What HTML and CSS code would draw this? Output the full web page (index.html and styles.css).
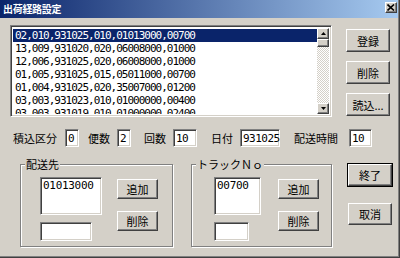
FILE: index.html
```html
<!DOCTYPE html>
<html>
  <head>
    <title>出荷経路設定</title>
    <link rel="stylesheet" href="styles.css">
  </head>
  <body>
    <div class="window">
      <div class="titlebar">
        <span class="title">出荷経路設定</span>
        <button class="close">
          <svg width="8" height="7" viewBox="0 0 8 7"><path d="M0.5 0.5 L7 6.5 M7 0.5 L0.5 6.5" stroke="#000" stroke-width="1.6"/></svg>
        </button>
      </div>

      <div class="content">
        <div class="top-row">
          <div class="listbox main-list">
            <ul class="rows">
              <li class="selected">02,010,931025,010,01013000,00700</li>
              <li>13,009,931020,020,06008000,01000</li>
              <li>12,006,931025,020,06008000,01000</li>
              <li>01,005,931025,015,05011000,00700</li>
              <li>01,004,931025,020,35007000,01200</li>
              <li>03,003,931023,010,01000000,00400</li>
              <li>03,003,931019,010,01000000,02400</li>
            </ul>
            <div class="scrollbar">
              <div class="scroll-btn">
                <svg width="5" height="3" viewBox="0 0 5 3"><path d="M2.5 0 L5 3 L0 3 Z" fill="#000"/></svg>
              </div>
              <div class="thumb"></div>
              <div class="track"></div>
              <div class="scroll-btn">
                <svg width="5" height="3" viewBox="0 0 5 3"><path d="M0 0 L5 0 L2.5 3 Z" fill="#000"/></svg>
              </div>
            </div>
          </div>

          <div class="side-buttons">
            <button class="btn">登録</button>
            <button class="btn">削除</button>
            <button class="btn">読込...</button>
          </div>
        </div>

        <div class="fields">
          <label class="field f1">積込区分 <span class="edit w1">0</span></label>
          <label class="field f2">便数 <span class="edit w1">2</span></label>
          <label class="field f3">回数 <span class="edit w2">10</span></label>
          <label class="field f4">日付 <span class="edit w6">931025</span></label>
          <label class="field f5">配送時間 <span class="edit w2b">10</span></label>
        </div>

        <div class="bottom-row">
          <fieldset class="group dest">
            <legend>配送先</legend>
            <div class="group-inner">
              <div class="left-col">
                <div class="listbox small-list"><div class="item">01013000</div></div>
                <div class="edit small-edit"></div>
              </div>
              <div class="right-col">
                <button class="btn small">追加</button>
                <button class="btn small">削除</button>
              </div>
            </div>
          </fieldset>

          <fieldset class="group truck">
            <legend>トラックＮｏ</legend>
            <div class="group-inner">
              <div class="left-col">
                <div class="listbox small-list"><div class="item">00700</div></div>
                <div class="edit small-edit"></div>
              </div>
              <div class="right-col">
                <button class="btn small">追加</button>
                <button class="btn small">削除</button>
              </div>
            </div>
          </fieldset>

          <div class="end-buttons">
            <button class="btn default">終了</button>
            <button class="btn">取消</button>
          </div>
        </div>
      </div>
    </div>
  </body>
</html>
```

FILE: styles.css
```css
body {
  margin: 0;
  background-color: #d4d0c8;
}

.window {
  width: 400px;
  height: 258px;
  box-sizing: border-box;
  background-color: #d4d0c8;
  border-right: 1px solid #404040;
  border-bottom: 1px solid #404040;
  box-shadow: inset -1px -1px #808080;
  font-family: "Noto Sans CJK JP", sans-serif;
  font-size: 11px;
  color: #000;
  overflow: hidden;
}

/* title bar */
.titlebar {
  height: 18px;
  margin-right: 1px;
  display: flex;
  align-items: center;
  justify-content: space-between;
  padding: 0 1px 0 3px;
  background: linear-gradient(to right, #0a246a, #a6caf0);
}

.title {
  color: #fff;
  font-weight: bold;
  font-size: 10px;
  line-height: 12px;
  letter-spacing: -0.3px;
}

.close {
  width: 12px;
  height: 11px;
  margin-top: -4px;
  padding: 0;
  display: flex;
  align-items: center;
  justify-content: center;
  background-color: #d4d0c8;
  border: 1px solid;
  border-color: #fff #404040 #404040 #fff;
  box-shadow: inset -1px -1px #808080;
}

.content {
  padding: 7px 0 0 10px;
}

/* shared controls */
.btn {
  box-sizing: border-box;
  width: 44px;
  height: 23px;
  padding: 0;
  font-family: "Noto Sans CJK JP", sans-serif;
  font-size: 11px;
  line-height: 12px;
  color: #000;
  background-color: #d4d0c8;
  border: 1px solid;
  border-color: #fff #404040 #404040 #fff;
  box-shadow: inset -1px -1px #808080;
}

.btn.default {
  outline: 1px solid #000;
  outline-offset: 0;
  border-color: #fff #404040 #404040 #fff;
}

.listbox,
.edit {
  box-sizing: border-box;
  background-color: #fff;
  border: 1px solid;
  border-color: #808080 #fff #fff #808080;
  box-shadow: inset 1px 1px #404040, inset -1px -1px #d4d0c8;
}

/* top list */
.top-row {
  display: flex;
}

.main-list {
  width: 322px;
  height: 92px;
  display: flex;
  padding: 2px;
}

.rows {
  flex: 1;
  margin: 0;
  padding: 1px 0 0 0;
  list-style: none;
  overflow: hidden;
  font-family: "DejaVu Sans Mono", monospace;
  font-size: 11px;
  letter-spacing: -1px;
}

.rows li {
  height: 13px;
  line-height: 13px;
  padding-left: 2px;
  white-space: nowrap;
}

.rows li.selected {
  background-color: #0a246a;
  color: #fff;
}

.scrollbar {
  width: 12px;
  display: flex;
  flex-direction: column;
}

.scroll-btn,
.thumb {
  box-sizing: border-box;
  height: 11px;
  display: flex;
  align-items: center;
  justify-content: center;
  background-color: #d4d0c8;
  border: 1px solid;
  border-color: #fff #404040 #404040 #fff;
  box-shadow: inset -1px -1px #808080;
}

.thumb {
  height: 8px;
}

.track {
  flex: 1;
  background-image: conic-gradient(#fff 25%, #d4d0c8 0 50%, #fff 0 75%, #d4d0c8 0);
  background-size: 2px 2px;
}

.side-buttons {
  display: flex;
  flex-direction: column;
  gap: 9px;
  margin: 4px 0 0 14px;
}

/* field row */
.fields {
  display: flex;
  align-items: center;
  margin-top: 12px;
  height: 18px;
}

.field {
  display: flex;
  align-items: center;
  gap: 8px;
  line-height: 12px;
}

.f1 { margin-left: 3px; }
.f2 { margin-left: 9px; gap: 7px; }
.f3 { margin-left: 13px; gap: 7px; }
.f4 { margin-left: 14px; gap: 7px; }
.f5 { margin-left: 14px; gap: 11px; }

.fields .edit {
  height: 18px;
  padding: 2px 0 0 2px;
  font-family: "DejaVu Sans Mono", monospace;
  font-size: 11px;
  line-height: 13px;
  letter-spacing: -0.5px;
}

.w1 { width: 14px; }
.w2 { width: 24px; }
.w2b { width: 23px; }
.w6 { width: 40px; }

/* group boxes */
.bottom-row {
  display: flex;
  margin-top: 11px;
}

.group {
  box-sizing: border-box;
  height: 89px;
  margin: 0 0 0 10px;
  padding: 0;
  border: 1px solid #808080;
  box-shadow: inset 1px 1px #fff, 1px 1px #fff;
}

.group legend {
  margin-left: 4px;
  padding: 0 1px;
  line-height: 12px;
  background-color: #d4d0c8;
}

.dest {
  width: 153px;
}

.truck {
  width: 141px;
  margin-left: 18px;
}

.group-inner {
  display: flex;
  padding: 7px 0 0 19px;
}

.truck .group-inner {
  padding-left: 22px;
}

.left-col {
  display: flex;
  flex-direction: column;
  gap: 7px;
}

.small-list {
  width: 62px;
  height: 38px;
  padding: 2px 0 0 2px;
  font-family: "DejaVu Sans Mono", monospace;
  font-size: 11px;
  line-height: 12px;
  letter-spacing: -0.3px;
}

.small-edit {
  width: 52px;
  height: 19px;
}

.truck .small-list {
  width: 47px;
}

.truck .small-edit {
  width: 35px;
}

.right-col {
  display: flex;
  flex-direction: column;
  gap: 12px;
  margin: 2px 0 0 15px;
}

.truck .right-col {
  margin-left: 17px;
}

.btn.small {
  width: 41px;
  height: 20px;
}

.end-buttons {
  display: flex;
  flex-direction: column;
  gap: 17px;
  margin: 6px 0 0 16px;
}

.end-buttons .btn {
  height: 22px;
}
```
